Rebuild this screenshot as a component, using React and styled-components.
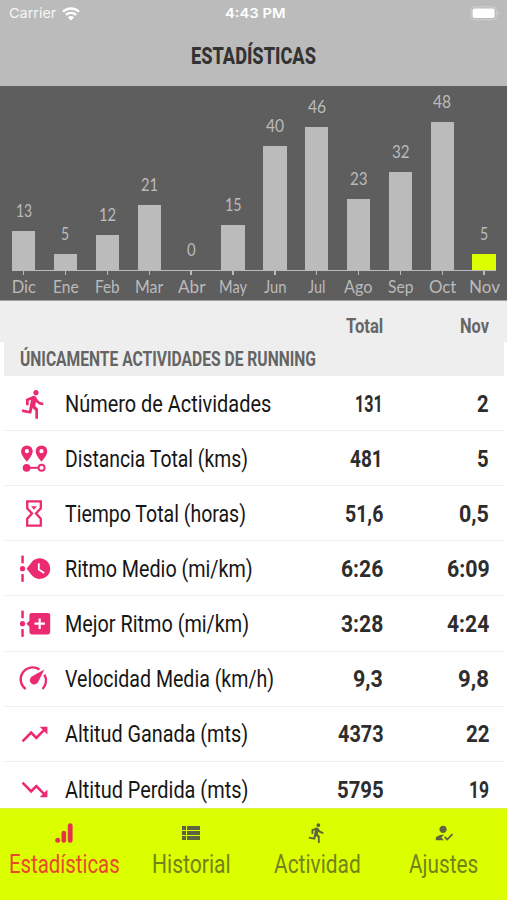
import { useLayoutEffect, useRef, useState } from "react";
import styled, { createGlobalStyle, ThemeProvider } from "styled-components";
import {
  MdDirectionsRun,
  MdHowToReg,
  MdTrendingDown,
  MdTrendingUp,
  MdViewList,
} from "react-icons/md";

const theme = {
  pink: "#ec2a72",
  lime: "#dcff00",
  gray: "#bbbbbb",
  dark: "#5e5e5e",
  light: "#eeeeee",
  condensed: `Roboto, "Liberation Sans", sans-serif`,
  chart: `Lato, "Open Sans", sans-serif`,
  system: `Inter, "Liberation Sans", sans-serif`,
};

const GlobalStyle = createGlobalStyle`
  * {
    box-sizing: border-box;
  }
  body {
    margin: 0;
    background: #fff;
    overflow: hidden;
  }
`;

const Screen = styled.div`
  display: flex;
  flex-direction: column;
  width: 507px;
  height: 900px;
  overflow: hidden;
  font-family: ${(props) => props.theme.condensed};
`;

const FitBox = styled.span`
  display: block;
  flex: none;
  width: ${(props) => props.$width}px;
  white-space: nowrap;
`;

const FitInner = styled.span`
  display: inline-block;
  transform-origin: 0 50%;
`;

// Condenses a single line of text to the given width
function Fit({ width, children }) {
  const ref = useRef(null);
  const [scale, setScale] = useState(1);

  useLayoutEffect(() => {
    setScale(width / ref.current.offsetWidth);
  }, [width, children]);

  return (
    <FitBox $width={width}>
      <FitInner ref={ref} style={{ transform: `scaleX(${scale})` }}>
        {children}
      </FitInner>
    </FitBox>
  );
}

const Header = styled.header`
  flex: none;
  height: 86px;
  background: ${(props) => props.theme.gray};
`;

const StatusBar = styled.div`
  display: grid;
  grid-template-columns: 1fr auto 1fr;
  align-items: center;
  height: 27px;
  padding: 0 7px 0 9px;
  color: #fff;
  font-family: ${(props) => props.theme.system};
  font-size: 13.5px;
  line-height: 27px;
`;

const Carrier = styled.div`
  display: flex;
  align-items: center;
  gap: 6px;
  color: #f6f6f6;
`;

const Time = styled.div`
  font-weight: 600;
`;

const BatteryIcon = styled.svg`
  justify-self: end;
`;

const Title = styled.h1`
  display: flex;
  justify-content: center;
  margin: 0;
  height: 59px;
  color: #333;
  font-size: 24.3px;
  font-weight: 800;
  line-height: 58px;
`;

const Chart = styled.section`
  flex: none;
  display: grid;
  grid-template-columns: repeat(12, 41.87px);
  height: 215px;
  padding-left: 2.8px;
  background: ${(props) => props.theme.dark};
  border-top: 1px solid #626262;
  border-bottom: 1px solid #a3a3a3;
  color: ${(props) => props.theme.gray};
  font-family: ${(props) => props.theme.chart};
  font-size: 16.5px;
  line-height: 20px;
`;

const Month = styled.div`
  display: flex;
  flex-direction: column;
  align-items: center;
`;

const Plot = styled.div`
  display: flex;
  flex-direction: column;
  justify-content: flex-end;
  align-items: center;
  gap: 10px;
  width: 100%;
  height: 183px;
`;

const Bar = styled.div`
  width: 23.4px;
  background: ${(props) =>
    props.$active ? props.theme.lime : props.theme.gray};
`;

const Axis = styled.div`
  align-self: ${(props) => props.$align};
  width: ${(props) => (props.$align === "center" ? "100%" : "32.6px")};
  height: 1px;
  background: ${(props) => props.theme.gray};
`;

const Tick = styled.div`
  width: 1.4px;
  height: 4px;
  margin-bottom: 2px;
  background: ${(props) => props.theme.gray};
`;

const Columns = styled.div`
  flex: none;
  display: flex;
  align-items: center;
  height: 41px;
  padding: 9px 18px 0 20px;
  background: ${(props) => props.theme.light};
  color: #666;
  font-size: 19.8px;
  font-weight: 700;
`;

const SectionTitle = styled.h2`
  flex: none;
  display: flex;
  align-items: center;
  height: 34px;
  margin: 0 3px 0 4px;
  padding: 0 0 0 16px;
  background: ${(props) => props.theme.light};
  color: #646464;
  font-size: 20px;
  font-weight: 700;
`;

const List = styled.main`
  flex: 1;
  min-height: 0;
  overflow: hidden;
  padding: 0 3px 0 4px;
`;

const Row = styled.div`
  display: flex;
  align-items: center;
  height: 55.12px;
  padding: 1.5px 15px 0 14px;
  border-bottom: 1.5px solid #f1f1f1;
  color: #161616;
  font-size: 23.6px;
`;

const RowIcon = styled.div`
  display: flex;
  align-items: center;
  justify-content: center;
  width: 32px;
  height: 32px;
  margin-right: 15px;
  color: ${(props) => props.theme.pink};
`;

const Value = styled.div`
  display: flex;
  justify-content: flex-end;
  width: ${(props) => (props.$last ? "106px" : "auto")};
  margin-left: ${(props) => (props.$last ? "0" : "auto")};
  color: ${(props) => props.$color || "#2d2d2d"};
  font-weight: 700;
`;

const TabBar = styled.nav`
  flex: none;
  display: grid;
  grid-template-columns: repeat(4, 126.6px);
  height: 92px;
  padding-left: 1px;
  background: ${(props) => props.theme.lime};
  border-top: 1px solid #dcf04a;
`;

const Tab = styled.div`
  display: flex;
  flex-direction: column;
  align-items: center;
  padding-top: 12px;
  color: ${(props) => (props.$active ? "#e9482c" : "#73831b")};
  font-size: 26.6px;
  line-height: 38px;
`;

const TabIcon = styled.div`
  display: flex;
  align-items: center;
  justify-content: center;
  height: 24px;
  color: ${(props) => (props.$active ? "#e3344b" : "#5e6440")};
`;

function WifiIcon() {
  return (
    <svg width="18" height="14" viewBox="0 0 18 14" fill="none">
      <path
        d="M1 4.8a11.4 11.4 0 0 1 16 0M3.9 7.9a7.3 7.3 0 0 1 10.2 0"
        stroke="#fff"
        strokeWidth="2.3"
      />
      <path d="M9 13.6 5.9 10.4a4.5 4.5 0 0 1 6.2 0Z" fill="#fff" />
    </svg>
  );
}

function Battery() {
  return (
    <BatteryIcon width="30" height="15" viewBox="0 0 30 15" fill="none">
      <rect x="0.8" y="0.8" width="25.6" height="13" rx="3.6" stroke="#d0d0d0" />
      <rect x="2.6" y="2.6" width="22" height="9.4" rx="1.8" fill="#fff" />
      <path d="M27.8 5.2c2 .8 2 3.4 0 4.2Z" fill="#d0d0d0" />
    </BatteryIcon>
  );
}

function PinsIcon() {
  const pin =
    "M0 10.6C-2.6 7.2-5.8 3.6-5.8 0a5.8 5.8 0 0 1 11.6 0C5.8 3.6 2.6 7.2 0 10.6ZM0-2.1a2.1 2.1 0 1 0 0 4.2 2.1 2.1 0 0 0 0-4.2Z";
  return (
    <svg width="32" height="32" viewBox="0 0 32 32" fill="currentColor">
      <path d={pin} transform="translate(8.9 8.2)" />
      <path d={pin} transform="translate(23.5 8.2)" />
      <circle cx="8.6" cy="24.8" r="3.9" />
      <path d="M8 23.8h13v2H8z" />
      <circle
        cx="23.6"
        cy="24.8"
        r="3"
        fill="none"
        stroke="currentColor"
        strokeWidth="1.9"
      />
    </svg>
  );
}

function HourglassIcon() {
  return (
    <svg width="32" height="32" viewBox="0 0 32 32" fill="none">
      <path
        d="M9.2 3.4h13.6v6.8L18 15.5l4.8 5.3v6.8H9.2v-6.8l4.8-5.3-4.8-5.3Z"
        stroke="currentColor"
        strokeWidth="2.3"
      />
      <path d="M13 8.2h6l-3 3.6z" fill="currentColor" />
    </svg>
  );
}

function Timeline({ children }) {
  return (
    <svg
      width="32"
      height="32"
      viewBox="0 0 32 32"
      fill="currentColor"
      overflow="visible"
    >
      <rect x="3.3" y="2.4" width="2.5" height="8" rx="0.8" />
      <rect x="3.3" y="20.9" width="2.5" height="8" rx="0.8" />
      <circle cx="4.5" cy="15.7" r="2.6" />
      {children}
    </svg>
  );
}

function TimelineClockIcon() {
  return (
    <Timeline>
      <path d="M8.6 15.7l5-6.4a10.4 10.4 0 1 1 0 12.8Z" />
      <path d="M20.8 10.2v6.3l5.4 3.6" fill="none" stroke="#fff" strokeWidth="1.8" />
    </Timeline>
  );
}

function TimelinePlusIcon() {
  return (
    <Timeline>
      <path d="M8.4 15.7l3-3V7.3a2.3 2.3 0 0 1 2.3-2.3h16.2A2.3 2.3 0 0 1 32.2 7.3v16.8a2.3 2.3 0 0 1-2.3 2.3H13.7a2.3 2.3 0 0 1-2.3-2.3v-5.4Z" />
      <path d="M21.7 10.5v10.4M16.5 15.7h10.4" stroke="#fff" strokeWidth="2.2" />
    </Timeline>
  );
}

function GaugeIcon() {
  return (
    <svg width="32" height="32" viewBox="0 0 32 32" fill="currentColor">
      <path
        d="M7.7 26A11.8 11.8 0 0 1 21.5 6.6M26.4 11.6A11.8 11.8 0 0 1 24.5 26"
        fill="none"
        stroke="currentColor"
        strokeWidth="2.4"
      />
      <path d="M26.4 6.5 19.9 19.5a4.4 4.4 0 1 1-6.2-6Z" />
    </svg>
  );
}

function AnalyticsIcon() {
  return (
    <svg width="20" height="20" viewBox="0 0 20 20" fill="currentColor">
      <circle cx="3.7" cy="17.2" r="2.5" />
      <rect x="7.5" y="7.8" width="4.6" height="11.9" rx="2.2" />
      <rect x="13.8" y="0.2" width="4.8" height="19.5" rx="2.3" />
    </svg>
  );
}

const months = [
  { name: "Dic", value: 13, height: 38.7, w: 24, vw: 16 },
  { name: "Ene", value: 5, height: 16.3, w: 25.5, vw: 8.5 },
  { name: "Feb", value: 12, height: 35.4, w: 25, vw: 17 },
  { name: "Mar", value: 21, height: 65.4, w: 28, vw: 17 },
  { name: "Abr", value: 0, height: 0, w: 27, vw: 9 },
  { name: "May", value: 15, height: 44.7, w: 28.5, vw: 16.5 },
  { name: "Jun", value: 40, height: 124, w: 22.5, vw: 18 },
  { name: "Jul", value: 46, height: 143, w: 17.5, vw: 18 },
  { name: "Ago", value: 23, height: 70.7, w: 28.5, vw: 17.5 },
  { name: "Sep", value: 32, height: 98, w: 25.5, vw: 17.5 },
  { name: "Oct", value: 48, height: 147.7, w: 27.5, vw: 18 },
  { name: "Nov", value: 5, height: 15.7, w: 31, vw: 8.5 },
];

const stats = [
  { icon: <MdDirectionsRun size={32} />, label: "Número de Actividades", w: 206, total: ["131", 28], month: ["2", 12] },
  { icon: <PinsIcon />, label: "Distancia Total (kms)", w: 183, total: ["481", 33], month: ["5", 12] },
  { icon: <HourglassIcon />, label: "Tiempo Total (horas)", w: 181, total: ["51,6", 38], month: ["0,5", 30] },
  { icon: <TimelineClockIcon />, label: "Ritmo Medio (mi/km)", w: 188, total: ["6:26", 42], month: ["6:09", 42.5] },
  { icon: <TimelinePlusIcon />, label: "Mejor Ritmo (mi/km)", w: 184, total: ["3:28", 42], month: ["4:24", 42] },
  { icon: <GaugeIcon />, label: "Velocidad Media (km/h)", w: 209, total: ["9,3", 30], month: ["9,8", 31] },
  { icon: <MdTrendingUp size={31} />, label: "Altitud Ganada (mts)", w: 183, total: ["4373", 45.5], month: ["22", 23.5] },
  { icon: <MdTrendingDown size={31} />, label: "Altitud Perdida (mts)", w: 183, total: ["5795", 46.5], month: ["19", 20] },
];

const tabs = [
  { icon: <AnalyticsIcon />, label: "Estadísticas", w: 111, active: true },
  { icon: <MdViewList size={24} />, label: "Historial", w: 78.5 },
  { icon: <MdDirectionsRun size={22} />, label: "Actividad", w: 86.5 },
  { icon: <MdHowToReg size={22} />, label: "Ajustes", w: 69.5 },
];

function axisAlign(index) {
  if (index === 0) return "flex-end";
  return index === months.length - 1 ? "flex-start" : "center";
}

function App() {
  return (
    <ThemeProvider theme={theme}>
      <GlobalStyle />
      <Screen>
        <Header>
          <StatusBar>
            <Carrier>
              <Fit width={47}>Carrier</Fit>
              <WifiIcon />
            </Carrier>
            <Time>
              <Fit width={60}>4:43 PM</Fit>
            </Time>
            <Battery />
          </StatusBar>
          <Title>
            <Fit width={125}>ESTADÍSTICAS</Fit>
          </Title>
        </Header>
        <Chart>
          {months.map((month, i) => (
            <Month key={month.name}>
              <Plot>
                <Fit width={month.vw}>{month.value}</Fit>
                <Bar
                  $active={i === months.length - 1}
                  style={{ height: month.height }}
                />
              </Plot>
              <Axis $align={axisAlign(i)} />
              <Tick />
              <Fit width={month.w}>{month.name}</Fit>
            </Month>
          ))}
        </Chart>
        <Columns>
          <Value $color="#666">
            <Fit width={37}>Total</Fit>
          </Value>
          <Value $color="#666" $last>
            <Fit width={29}>Nov</Fit>
          </Value>
        </Columns>
        <SectionTitle>
          <Fit width={296}>ÚNICAMENTE ACTIVIDADES DE RUNNING</Fit>
        </SectionTitle>
        <List>
          {stats.map((stat) => (
            <Row key={stat.label}>
              <RowIcon>{stat.icon}</RowIcon>
              <Fit width={stat.w}>{stat.label}</Fit>
              <Value>
                <Fit width={stat.total[1]}>{stat.total[0]}</Fit>
              </Value>
              <Value $last>
                <Fit width={stat.month[1]}>{stat.month[0]}</Fit>
              </Value>
            </Row>
          ))}
        </List>
        <TabBar>
          {tabs.map((tab) => (
            <Tab key={tab.label} $active={tab.active}>
              <TabIcon $active={tab.active}>{tab.icon}</TabIcon>
              <Fit width={tab.w}>{tab.label}</Fit>
            </Tab>
          ))}
        </TabBar>
      </Screen>
    </ThemeProvider>
  );
}

export default App;
